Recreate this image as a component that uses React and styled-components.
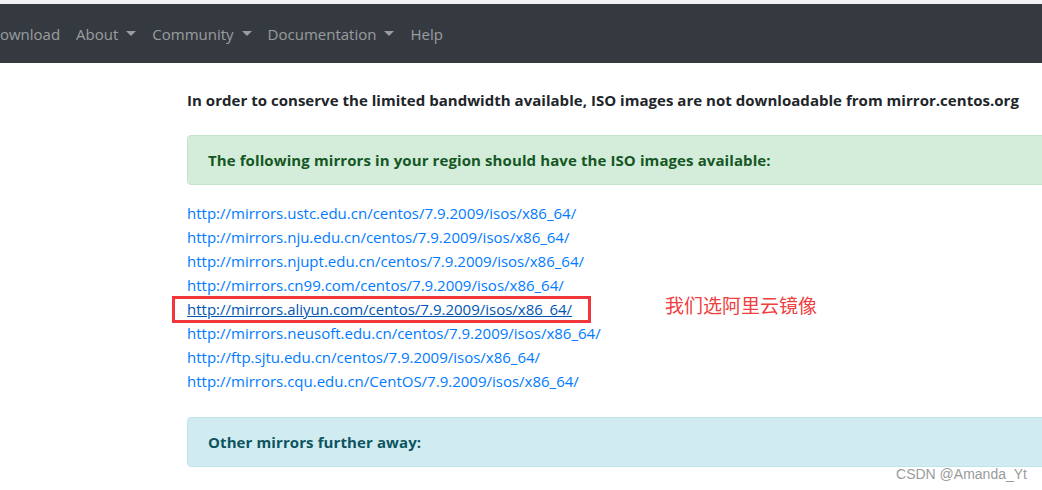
import styled, { createGlobalStyle } from "styled-components";

const GlobalStyle = createGlobalStyle`
  body {
    margin: 0;
    background: #fff;
    font-family: "Open Sans", "Noto Sans", sans-serif;
    overflow: hidden;
  }
`;

const Page = styled.div`
  position: relative;
  width: 1042px;
  height: 490px;
  overflow: hidden;
`;

const TopStrip = styled.div`
  height: 4px;
  background: #f2f2f2;
`;

const Navbar = styled.nav`
  height: 59px;
  background: #343a40;
  display: flex;
  align-items: center;
`;

const NavList = styled.ul`
  list-style: none;
  margin: 0 0 0 -19px;
  padding: 0;
  display: flex;
  align-items: center;
`;

const NavItem = styled.li`
  padding: 0 8px;
  font-size: 15px;
  color: rgba(255, 255, 255, 0.5);
  display: flex;
  align-items: center;
  &::after {
    content: "";
    display: ${(p) => (p.$dropdown ? "inline-block" : "none")};
    margin-left: 8px;
    border-top: 5px solid rgba(255, 255, 255, 0.5);
    border-left: 5px solid transparent;
    border-right: 5px solid transparent;
  }
`;

const Main = styled.main`
  padding-left: 187px;
  width: 1000px;
`;

const Lead = styled.p`
  margin: 25px 0 0;
  line-height: 24px;
  font-size: 15px;
  font-weight: 700;
  color: #212529;
  white-space: nowrap;
  letter-spacing: 0.03px;
`;

const Alert = styled.div`
  margin-top: ${(p) => p.$top}px;
  padding: 12px 20px;
  line-height: 24px;
  font-size: 15px;
  font-weight: 700;
  letter-spacing: 0.1px;
  border-radius: 4px;
  border: 1px solid ${(p) => (p.$tone === "info" ? "#bee5eb" : "#c3e6cb")};
  background: ${(p) => (p.$tone === "info" ? "#d1ecf1" : "#d4edda")};
  color: ${(p) => (p.$tone === "info" ? "#0c5460" : "#155724")};
`;

const LinkList = styled.div`
  margin-top: 16px;
  display: flex;
  flex-direction: column;
`;

const Line = styled.div`
  position: relative;
  height: 24px;
  line-height: 24px;
`;

const Mirror = styled.a`
  font-size: 15px;
  color: ${(p) => (p.$picked ? "#0056b3" : "#007bff")};
  text-decoration: ${(p) => (p.$picked ? "underline" : "none")};
  white-space: nowrap;
`;

const Highlight = styled.span`
  position: absolute;
  left: -15px;
  top: -1px;
  width: 413px;
  height: 21px;
  border: 3px solid #f0363a;
`;

const Note = styled.span`
  position: absolute;
  left: 478px;
  top: -4px;
  font-size: 19px;
  font-family: "Noto Sans CJK SC", sans-serif;
  color: #ef4040;
  white-space: nowrap;
`;

const Watermark = styled.div`
  position: absolute;
  right: 15px;
  bottom: 8px;
  font-family: "Liberation Sans", sans-serif;
  font-size: 14px;
  color: #9a9a9a;
  text-shadow: 0 0 2px #fff;
`;

const mirrors = [
  "http://mirrors.ustc.edu.cn/centos/7.9.2009/isos/x86_64/",
  "http://mirrors.nju.edu.cn/centos/7.9.2009/isos/x86_64/",
  "http://mirrors.njupt.edu.cn/centos/7.9.2009/isos/x86_64/",
  "http://mirrors.cn99.com/centos/7.9.2009/isos/x86_64/",
  "http://mirrors.aliyun.com/centos/7.9.2009/isos/x86_64/",
  "http://mirrors.neusoft.edu.cn/centos/7.9.2009/isos/x86_64/",
  "http://ftp.sjtu.edu.cn/centos/7.9.2009/isos/x86_64/",
  "http://mirrors.cqu.edu.cn/CentOS/7.9.2009/isos/x86_64/",
];

const far = ["http://mirrors.bfsu.edu.cn/centos/7.9.2009/isos/x86_64/"];

const App = () => {
  return (
    <>
      <GlobalStyle />
      <Page>
        <TopStrip />
        <Navbar>
          <NavList>
            <NavItem>Download</NavItem>
            <NavItem $dropdown>About</NavItem>
            <NavItem $dropdown>Community</NavItem>
            <NavItem $dropdown>Documentation</NavItem>
            <NavItem>Help</NavItem>
          </NavList>
        </Navbar>
        <Main>
          <Lead>
            In order to conserve the limited bandwidth available, ISO images are
            not downloadable from mirror.centos.org
          </Lead>
          <Alert $top={23}>
            The following mirrors in your region should have the ISO images
            available:
          </Alert>
          <LinkList>
            {mirrors.map((url) => {
              const picked = url.includes("aliyun");
              return (
                <Line key={url}>
                  <Mirror href="#" $picked={picked}>
                    {url}
                  </Mirror>
                  {picked && <Highlight />}
                  {picked && <Note>我们选阿里云镜像</Note>}
                </Line>
              );
            })}
          </LinkList>
          <Alert $tone="info" $top={24}>
            Other mirrors further away:
          </Alert>
          <LinkList>
            {far.map((url) => (
              <Line key={url}>
                <Mirror href="#">{url}</Mirror>
              </Line>
            ))}
          </LinkList>
        </Main>
        <Watermark>CSDN @Amanda_Yt</Watermark>
      </Page>
    </>
  );
};

export default App;
